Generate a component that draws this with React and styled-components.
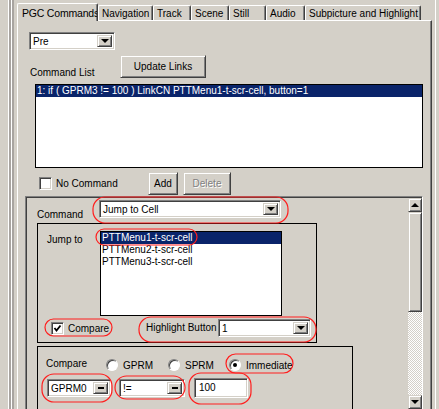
import styled, { createGlobalStyle, css } from 'styled-components';

const GlobalStyle = createGlobalStyle`
  html, body {
    margin: 0;
    padding: 0;
    background: #d4d0c8;
  }
  body {
    font-family: "Liberation Sans", Arial, sans-serif;
    font-size: 10px;
    color: #000;
  }
`;

const TABS = [
  { label: 'PGC Commands', w: 81, active: true },
  { label: 'Navigation', w: 55 },
  { label: 'Track', w: 38 },
  { label: 'Scene', w: 38 },
  { label: 'Still', w: 37 },
  { label: 'Audio', w: 39 },
  { label: 'Subpicture and Highlight', w: 116 },
];

const JUMP_TARGETS = ['PTTMenu1-t-scr-cell', 'PTTMenu2-t-scr-cell', 'PTTMenu3-t-scr-cell'];

// red hand-drawn circles from the original screenshot
const MARKS = [
  [93, 197, 288, 223],
  [96, 229, 197, 245],
  [45, 319, 112, 336],
  [139, 317, 316, 342],
  [226, 354, 293, 373],
  [42, 374, 112, 402],
  [115, 376, 185, 399],
  [189, 373, 251, 404],
];

const App = () => {
  return (
    <>
      <GlobalStyle />
      <Screen>
        <Rails $side="left" />
        <TabControl>
          <TabStrip>
            {TABS.map((t) => (
              <Tab key={t.label} $w={t.w} $active={t.active}>
                {t.label}
              </Tab>
            ))}
          </TabStrip>
          <TabPanel>
            <Combo $w={86} $ml={11} $mt={11} value="Pre" />

            <HeaderRow>
              <HeaderLabel>Command List</HeaderLabel>
              <PushButton $w={86}>Update Links</PushButton>
            </HeaderRow>

            <CommandList>
              <ListItem $selected>
                1: if ( GPRM3 != 100 ) LinkCN PTTMenu1-t-scr-cell, button=1
              </ListItem>
            </CommandList>

            <ActionRow>
              <CheckLabel $w={109}>
                <CheckBox />
                No Command
              </CheckLabel>
              <PushButton $w={30}>Add</PushButton>
              <PushButton $w={48} $ml={5} $disabled>
                Delete
              </PushButton>
            </ActionRow>

            <ScrollPanel>
              <ScrollContent>
                <CommandRow>
                  <RowLabel $w={62} $bottom>
                    Command
                  </RowLabel>
                  <Combo $w={182} value="Jump to Cell" />
                </CommandRow>

                <GroupBox $w={280} $h={120}>
                  <JumpRow>
                    <JumpLabel>Jump to</JumpLabel>
                    <TargetList>
                      {JUMP_TARGETS.map((t, i) => (
                        <ListItem key={t} $selected={i === 0}>
                          {t}
                        </ListItem>
                      ))}
                    </TargetList>
                  </JumpRow>
                  <OptionsRow>
                    <CheckLabel $w={95}>
                      <CheckBox $checked />
                      Compare
                    </CheckLabel>
                    <RowLabel $w={72}>Highlight Button</RowLabel>
                    <Combo $w={93} value="1" />
                  </OptionsRow>
                </GroupBox>

                <GroupBox $w={316} $h={100} $open>
                  <RadioRow>
                    <RowLabel $w={60} $raise>
                      Compare
                    </RowLabel>
                    <RadioLabel $w={62}>
                      <Radio />
                      GPRM
                    </RadioLabel>
                    <RadioLabel $w={61}>
                      <Radio />
                      SPRM
                    </RadioLabel>
                    <RadioLabel>
                      <Radio $checked />
                      Immediate
                    </RadioLabel>
                  </RadioRow>
                  <InputRow>
                    <Combo $w={64} value="GPRM0" flat />
                    <Combo $w={66} value="!=" flat />
                    <TextBox>100</TextBox>
                  </InputRow>
                </GroupBox>
              </ScrollContent>

              <ScrollBar>
                <ScrollButton $dir="up" />
                <ScrollThumb />
                <ScrollTrack />
                <ScrollButton $dir="down" />
              </ScrollBar>
            </ScrollPanel>
          </TabPanel>
        </TabControl>
        <Rails $side="right" />

        <Overlay viewBox="0 0 439 409" width="439" height="409">
          {MARKS.map(([x1, y1, x2, y2], i) => (
            <rect
              key={i}
              x={x1}
              y={y1}
              width={x2 - x1}
              height={y2 - y1}
              rx={Math.min(12, (y2 - y1) / 2)}
              fill="none"
              stroke="#ff1e1e"
              strokeWidth="1.2"
            />
          ))}
        </Overlay>
      </Screen>
    </>
  );
};

const Combo = ({ $w, $ml, $mt, value, flat }) => (
  <Field $w={$w} $ml={$ml} $mt={$mt}>
    <FieldText>{value}</FieldText>
    <DropButton $flat={flat} />
  </Field>
);

const CheckBox = ({ $checked }) => (
  <CheckSquare>
    {$checked && (
      <svg width="9" height="9" viewBox="0 0 9 9">
        <path d="M1.5 4 L3.5 6.5 L7.5 1.5" fill="none" stroke="#000" strokeWidth="1.8" />
      </svg>
    )}
  </CheckSquare>
);

export default App;

const raised = css`
  box-sizing: border-box;
  background: #d4d0c8;
  border: 1px solid;
  border-color: #d4d0c8 #404040 #404040 #d4d0c8;
  box-shadow: inset 1px 1px #fff, inset -1px -1px #808080;
`;

const sunken = css`
  box-sizing: border-box;
  border: 1px solid;
  border-color: #808080 #fff #fff #808080;
  box-shadow: inset 1px 1px #404040, inset -1px -1px #d4d0c8;
`;

const Screen = styled.div`
  position: relative;
  display: flex;
  width: 439px;
  height: 409px;
  overflow: hidden;
  background: #d4d0c8;
`;

const Rails = styled.div`
  flex: none;
  width: ${(p) => (p.$side === 'left' ? 17 : 7)}px;
  height: 100%;
  background: ${(p) =>
    p.$side === 'left'
      ? 'linear-gradient(to right, #d4d0c8 0 8px, #fff 8px 9px, #a8a4a0 9px 11px, #fff 11px 12px, #a8a4a0 12px 14px, #d4d0c8 14px)'
      : 'linear-gradient(to right, #d4d0c8 0 3px, #fff 3px 4px, #d4d0c8 4px)'};
`;

const TabControl = styled.div`
  flex: none;
  width: 415px;
  display: flex;
  flex-direction: column;
`;

const TabStrip = styled.div`
  position: relative;
  z-index: 1;
  display: flex;
  align-items: flex-end;
  height: 20px;
`;

const Tab = styled.div`
  box-sizing: border-box;
  flex: none;
  width: ${(p) => p.$w}px;
  height: ${(p) => (p.$active ? 18 : 15)}px;
  margin-bottom: ${(p) => (p.$active ? -1 : 0)}px;
  padding: ${(p) => (p.$active ? '3px 0 0 4px' : '2px 0 0 3px')};
  border-top: 1px solid #fff;
  border-left: 1px solid #fff;
  border-right: 1px solid #404040;
  border-radius: 2px 2px 0 0;
  box-shadow: inset -1px 0 #808080;
  background: #d4d0c8;
  font-size: ${(p) => (p.$active ? 10.5 : 10)}px;
  letter-spacing: ${(p) => (p.$active ? -0.2 : 0)}px;
  line-height: 12px;
  white-space: nowrap;
  overflow: hidden;
`;

const TabPanel = styled.div`
  flex: 1;
  min-height: 0;
  display: flex;
  flex-direction: column;
  border-top: 1px solid #fff;
  border-left: 1px solid #fff;
  border-right: 1px solid #404040;
  box-shadow: inset -1px 0 #808080;
`;

const Field = styled.div`
  ${sunken}
  flex: none;
  display: flex;
  width: ${(p) => p.$w}px;
  height: 18px;
  margin-left: ${(p) => p.$ml || 0}px;
  margin-top: ${(p) => p.$mt || 0}px;
  padding: 2px;
  background: #fff;
`;

const FieldText = styled.div`
  flex: 1;
  padding-left: 1px;
  line-height: 13px;
  white-space: nowrap;
  overflow: hidden;
`;

const DropButton = styled.div`
  ${raised}
  flex: none;
  width: 15px;
  display: flex;
  align-items: center;
  justify-content: center;

  &::after {
    content: '';
    ${(p) =>
      p.$flat
        ? css`
            width: 6px;
            height: 2px;
            background: #000;
          `
        : css`
            width: 0;
            height: 0;
            border-left: 4px solid transparent;
            border-right: 4px solid transparent;
            border-top: 4px solid #000;
          `}
  }
`;

const HeaderRow = styled.div`
  display: flex;
  margin-top: 5px;
  padding-left: 12px;
  height: 23px;
`;

const HeaderLabel = styled.div`
  width: 90px;
  align-self: flex-end;
  margin-bottom: -1px;
  line-height: 12px;
`;

const PushButton = styled.div`
  ${raised}
  flex: none;
  width: ${(p) => p.$w}px;
  height: 23px;
  margin-left: ${(p) => p.$ml || 0}px;
  display: flex;
  align-items: center;
  justify-content: center;
  color: ${(p) => (p.$disabled ? '#808080' : '#000')};
  text-shadow: ${(p) => (p.$disabled ? '1px 1px #fff' : 'none')};
`;

const CommandList = styled.div`
  box-sizing: border-box;
  width: 388px;
  height: 84px;
  margin: 6px 0 0 17px;
  background: #fff;
  border: 1px solid #000;
  overflow: hidden;
`;

const ListItem = styled.div`
  height: 12px;
  padding-left: 1px;
  line-height: 12px;
  white-space: nowrap;
  background: ${(p) => (p.$selected ? '#0a246a' : 'transparent')};
  color: ${(p) => (p.$selected ? '#fff' : '#000')};
`;

const ActionRow = styled.div`
  display: flex;
  align-items: center;
  height: 23px;
  margin-top: 4px;
  padding-left: 21px;
`;

const CheckLabel = styled.div`
  flex: none;
  display: flex;
  align-items: center;
  gap: 4px;
  width: ${(p) => p.$w}px;
`;

const CheckSquare = styled.div`
  ${sunken}
  flex: none;
  width: 13px;
  height: 13px;
  background: #fff;
  display: flex;
  align-items: center;
  justify-content: center;
`;

const ScrollPanel = styled.div`
  flex: 1;
  min-height: 0;
  display: flex;
  width: 398px;
  box-sizing: border-box;
  margin: 1px 0 0 7px;
  border-top: 1px solid #808080;
  border-left: 1px solid #808080;
  border-right: 1px solid #fff;
  box-shadow: inset 1px 1px #404040;
`;

const ScrollContent = styled.div`
  flex: 1;
  min-width: 0;
  padding: 1px 0 0 1px;
  overflow: hidden;
`;

const CommandRow = styled.div`
  display: flex;
  height: 18px;
  margin-top: 2px;
  padding-left: 10px;
`;

const RowLabel = styled.div`
  flex: none;
  width: ${(p) => p.$w}px;
  line-height: 12px;
  white-space: nowrap;
  align-self: ${(p) => (p.$bottom ? 'flex-end' : 'auto')};
  margin-bottom: ${(p) => (p.$bottom ? -3 : p.$raise ? 3 : 0)}px;
`;

const GroupBox = styled.div`
  box-sizing: border-box;
  width: ${(p) => p.$w}px;
  height: ${(p) => p.$h}px;
  margin: 5px 0 0 10px;
  border: 1px solid #000;
  border-bottom: ${(p) => (p.$open ? 'none' : '1px solid #000')};

  & + & {
    margin-top: 3px;
  }
`;

const JumpRow = styled.div`
  display: flex;
  margin-top: 7px;
`;

const JumpLabel = styled.div`
  width: 53px;
  padding: 3px 0 0 9px;
  line-height: 12px;
`;

const TargetList = styled.div`
  box-sizing: border-box;
  width: 182px;
  height: 85px;
  background: #fff;
  border: 1px solid #000;
  overflow: hidden;
`;

const OptionsRow = styled.div`
  display: flex;
  align-items: center;
  height: 18px;
  margin-top: 3px;
  padding-left: 13px;
`;

const RadioRow = styled.div`
  display: flex;
  align-items: center;
  height: 16px;
  margin-top: 10px;
  padding-left: 8px;
`;

const RadioLabel = styled.div`
  flex: none;
  display: flex;
  align-items: center;
  gap: 5px;
  width: ${(p) => (p.$w ? `${p.$w}px` : 'auto')};
`;

const Radio = styled.div`
  flex: none;
  box-sizing: border-box;
  width: 12px;
  height: 12px;
  border-radius: 50%;
  border: 1px solid;
  border-color: #808080 #fff #fff #808080;
  box-shadow: inset 1px 1px #404040;
  background: #fff;
  display: flex;
  align-items: center;
  justify-content: center;

  &::after {
    content: '';
    width: 4px;
    height: 4px;
    border-radius: 50%;
    background: ${(p) => (p.$checked ? '#000' : 'transparent')};
  }
`;

const InputRow = styled.div`
  display: flex;
  align-items: center;
  gap: 8px;
  height: 20px;
  margin-top: 5px;
  padding-left: 9px;
`;

const TextBox = styled.div`
  ${sunken}
  width: 54px;
  height: 20px;
  margin-left: 1px;
  padding: 3px 0 0 4px;
  background: #fff;
  line-height: 12px;
`;

const ScrollBar = styled.div`
  flex: none;
  width: 14px;
  display: flex;
  flex-direction: column;
  margin-top: 1px;
`;

const ScrollButton = styled.div`
  ${raised}
  flex: none;
  height: 14px;
  display: flex;
  align-items: center;
  justify-content: center;

  &::after {
    content: '';
    width: 0;
    height: 0;
    border-left: 4px solid transparent;
    border-right: 4px solid transparent;
    ${(p) =>
      p.$dir === 'up'
        ? 'border-bottom: 4px solid #000;'
        : 'border-top: 4px solid #000;'}
  }
`;

const ScrollThumb = styled.div`
  ${raised}
  flex: none;
  height: 100px;
`;

const ScrollTrack = styled.div`
  flex: 1;
  background: repeating-conic-gradient(#fff 0 25%, #d4d0c8 0 50%) 0 0 / 2px 2px;
`;

const Overlay = styled.svg`
  position: absolute;
  top: 0;
  left: 0;
  pointer-events: none;
`;
